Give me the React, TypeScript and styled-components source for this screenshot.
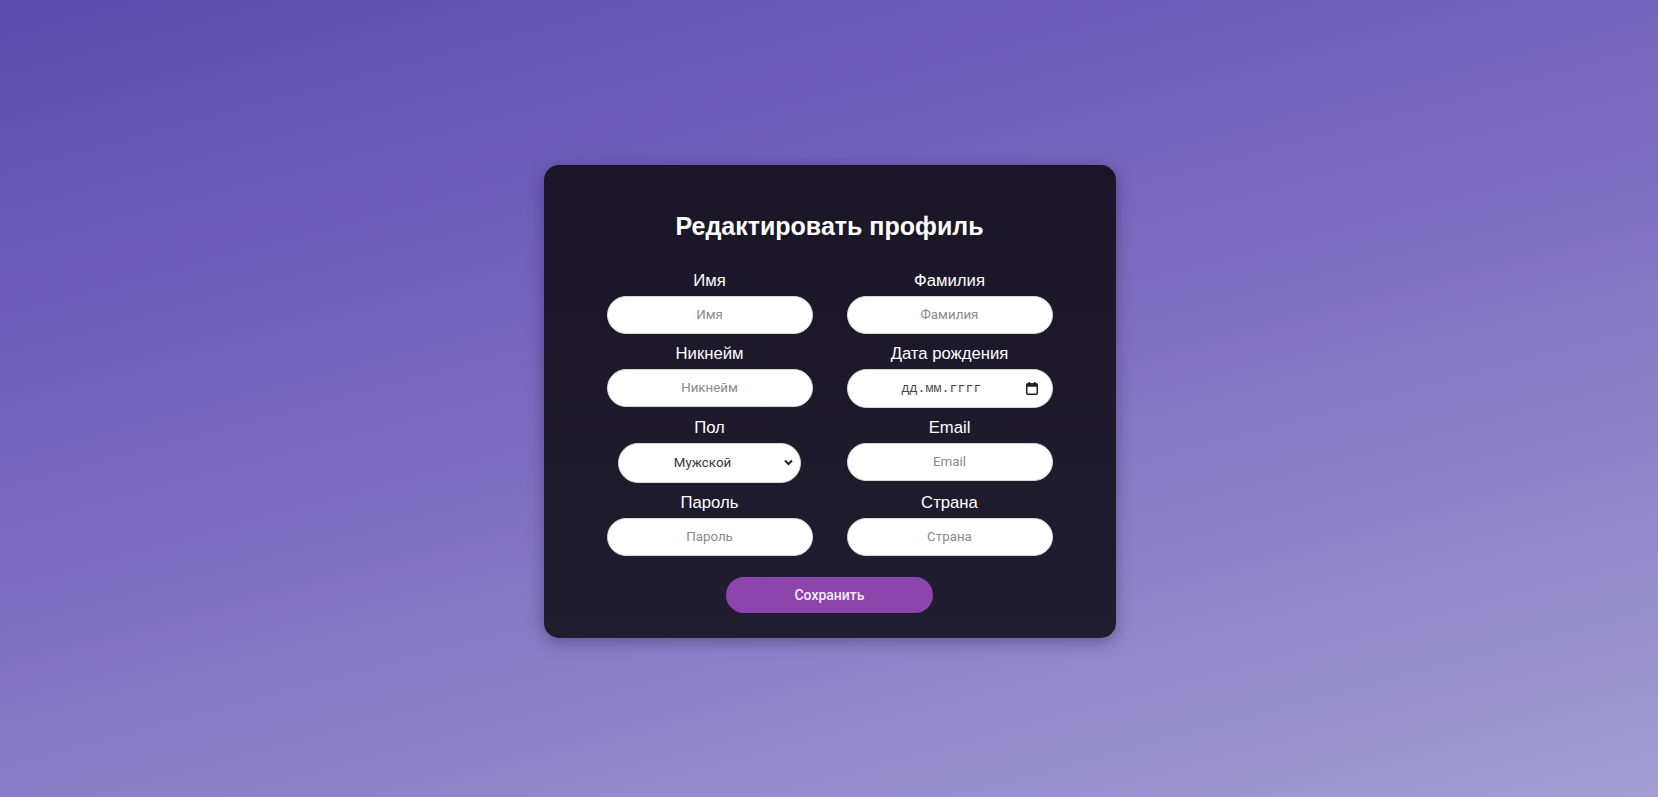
import React from "react";
import styled, { createGlobalStyle } from "styled-components";

const GlobalStyle = createGlobalStyle`
  html, body {
    margin: 0;
    padding: 0;
    height: 100%;
  }
  body {
    font-family: "Liberation Sans", Arial, sans-serif;
    background: linear-gradient(165deg, #5b4baf 0%, #7a6bbf 45%, #a49dd3 100%);
    background-attachment: fixed;
    min-height: 100vh;
  }
  * { box-sizing: border-box; }
`;

const Page = styled.div`
  min-height: 100vh;
  padding-top: 5px;
  padding-left: 1px;
  display: flex;
  align-items: center;
  justify-content: center;
`;

const Card = styled.form`
  width: 572px;
  padding: 47px 0 25px;
  border-radius: 15px;
  background: linear-gradient(180deg, #1a1628 0%, #201d2f 100%);
  box-shadow: 0 4px 16px rgba(20, 10, 50, 0.35);
  display: flex;
  flex-direction: column;
  align-items: center;
`;

const Title = styled.h2`
  margin: 0 0 32px;
  font-family: "Liberation Sans", Arial, sans-serif;
  font-size: 25px;
  line-height: 28px;
  font-weight: 700;
  color: #ffffff;
  text-align: center;
`;

const Grid = styled.div`
  display: grid;
  grid-template-columns: 206px 206px;
  column-gap: 34px;
  row-gap: 11px;
  justify-content: center;
`;

const Field = styled.div`
  display: flex;
  flex-direction: column;
  align-items: center;
`;

const Label = styled.label`
  font-family: "Liberation Sans", Arial, sans-serif;
  font-size: 16.7px;
  line-height: 18px;
  color: #ffffff;
  margin-bottom: 6px;
`;

const TextInput = styled.input`
  width: 206px;
  height: 38px;
  border: 1px solid #d6d6d6;
  border-radius: 19px;
  background: #ffffff;
  padding: 0 12px;
  font-family: Roboto, "Liberation Sans", sans-serif;
  font-size: 13.33px;
  color: #333;
  text-align: center;
  outline: none;
  &::placeholder {
    color: #8a8a8a;
  }
`;

const DateBox = styled.div`
  width: 206px;
  height: 39px;
  border: 1px solid #d6d6d6;
  border-radius: 20px;
  background: #ffffff;
  display: flex;
  align-items: center;
  padding: 0 14px 0 13px;
  gap: 3px;
`;

const DateInput = styled.input`
  flex: 1;
  min-width: 0;
  border: none;
  outline: none;
  background: transparent;
  font-family: "Liberation Mono", "DejaVu Sans Mono", monospace;
  font-size: 13.33px;
  color: #333;
  text-align: center;
  padding: 0;
  &::placeholder {
    color: #474747;
  }
`;

const SelectWrap = styled.div`
  position: relative;
  width: 183px;
  height: 40px;
`;

const Select = styled.select`
  appearance: none;
  -webkit-appearance: none;
  width: 100%;
  height: 100%;
  border: 1px solid #d6d6d6;
  border-radius: 20px;
  background: #ffffff;
  padding: 0 24px 0 10px;
  font-family: Roboto, "Liberation Sans", sans-serif;
  font-size: 13.33px;
  color: #3a3a3a;
  text-align: center;
  text-align-last: center;
  outline: none;
`;

const Chevron = styled.svg`
  position: absolute;
  right: 8px;
  top: 16px;
  width: 9px;
  height: 7px;
  pointer-events: none;
`;

const SaveButton = styled.button`
  margin-top: 21px;
  width: 207px;
  height: 36px;
  border: none;
  border-radius: 18px;
  background: #8e44ad;
  color: #f3ecf7;
  font-family: Roboto, "Liberation Sans", sans-serif;
  font-size: 14px;
  font-weight: 500;
  cursor: pointer;
`;

const CalendarIcon = () => (
  <svg width="12" height="13" viewBox="0 0 12 13" aria-hidden="true">
    <rect x="2.5" y="0" width="1.5" height="2.5" fill="#222" />
    <rect x="8" y="0" width="1.5" height="2.5" fill="#222" />
    <rect x="0.75" y="1.75" width="10.5" height="10.5" rx="1" fill="none" stroke="#222" strokeWidth="1.5" />
    <rect x="0.75" y="1.75" width="10.5" height="3" fill="#222" />
  </svg>
);

type TextFieldProps = { label: string; type?: string };

const TextField = ({ label, type = "text" }: TextFieldProps) => (
  <Field>
    <Label>{label}</Label>
    <TextInput type={type} placeholder={label} />
  </Field>
);

export default function App() {
  return (
    <>
      <GlobalStyle />
      <Page>
        <Card onSubmit={(e) => e.preventDefault()}>
          <Title>Редактировать профиль</Title>
          <Grid>
            <TextField label="Имя" />
            <TextField label="Фамилия" />
            <TextField label="Никнейм" />
            <Field>
              <Label>Дата рождения</Label>
              <DateBox>
                <DateInput type="text" placeholder="дд.мм.гггг" />
                <CalendarIcon />
              </DateBox>
            </Field>
            <Field>
              <Label>Пол</Label>
              <SelectWrap>
                <Select defaultValue="male">
                  <option value="male">Мужской</option>
                  <option value="female">Женский</option>
                </Select>
                <Chevron viewBox="0 0 9 7" aria-hidden="true">
                  <polyline points="1,1.5 4.5,5 8,1.5" fill="none" stroke="#222" strokeWidth="2" />
                </Chevron>
              </SelectWrap>
            </Field>
            <TextField label="Email" type="email" />
            <TextField label="Пароль" type="password" />
            <TextField label="Страна" />
          </Grid>
          <SaveButton type="submit">Сохранить</SaveButton>
        </Card>
      </Page>
    </>
  );
}
